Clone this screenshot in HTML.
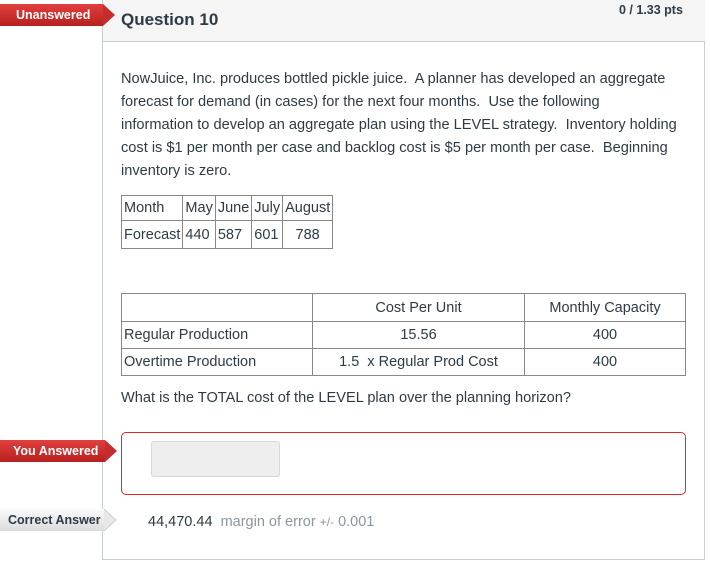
<!DOCTYPE html>
<html><head><style>
body{margin:0;width:711px;height:563px;background:#fff;font-family:"Liberation Sans",sans-serif;color:#2d3b45;position:relative;overflow:hidden}
.abs{position:absolute}
.box{left:102px;top:-1px;width:603px;height:561px;border:1px solid #c7cdd1;box-sizing:border-box}
.hdr{left:103px;top:0;width:602px;height:41px;background:#f5f5f5;border-bottom:1px solid #c7cdd1}
.tag{height:22px;line-height:22px;font-size:12.5px;font-weight:bold;color:#fff;background:linear-gradient(#e0403e,#b8201f);}
.tag:after{content:"";position:absolute;right:-12px;top:0;border-left:12px solid #c52c2b;border-top:11px solid transparent;border-bottom:11px solid transparent}
p{margin:0;font-size:14.6px;line-height:23px;color:#2d3b45;white-space:nowrap}
table{border-collapse:collapse;font-size:14.5px;position:absolute}
td{border:1px solid #888;padding:0 2px;color:#2d3b45;white-space:nowrap}
</style></head><body>
<div class="abs box"></div>
<div class="abs hdr"></div>
<div class="abs tag" style="left:0;top:4px;width:103px;text-align:left;padding-left:16px;box-sizing:border-box">Unanswered</div>
<div class="abs" style="left:121px;top:10px;font-size:17px;font-weight:bold;color:#2d3b45">Question 10</div>
<div class="abs" style="left:619px;top:3px;font-size:12.5px;font-weight:bold;color:#2d3b45">0 / 1.33 pts</div>
<div class="abs" style="left:121px;top:68px;width:575px">
<p>NowJuice, Inc. produces bottled pickle juice.&nbsp; A planner has developed an aggregate<br>forecast for demand (in cases) for the next four months.&nbsp; Use the following<br>information to develop an aggregate plan using the LEVEL strategy.&nbsp; Inventory holding<br>cost is $1 per month per case and backlog cost is $5 per month per case.&nbsp; Beginning<br>inventory is zero.</p></div>
<table style="left:121px;top:195px;width:211px">
<tr style="height:25px"><td style="width:57px">Month</td><td>May</td><td>June</td><td>July</td><td>August</td></tr>
<tr style="height:28px"><td>Forecast</td><td>440</td><td>587</td><td>601</td><td style="text-align:center">788</td></tr>
</table>
<table style="left:121px;top:293px;width:565px">
<tr style="height:28px"><td style="width:186px"></td><td style="width:207px;text-align:center">Cost Per Unit</td><td style="text-align:center">Monthly Capacity</td></tr>
<tr style="height:27px"><td>Regular Production</td><td style="text-align:center">15.56</td><td style="text-align:center">400</td></tr>
<tr style="height:27px"><td>Overtime Production</td><td style="text-align:center">1.5&nbsp; x Regular Prod Cost</td><td style="text-align:center">400</td></tr>
</table>
<div class="abs" style="left:121px;top:387px"><p>What is the TOTAL cost of the LEVEL plan over the planning horizon?</p></div>
<div class="abs" style="left:121px;top:432px;width:565px;height:63px;border:1.5px solid #e0262a;border-radius:5px;box-sizing:border-box"></div>
<div class="abs" style="left:151px;top:441px;width:129px;height:36px;background:#eee;border:1px solid #d8d8d8;border-radius:3px;box-sizing:border-box"></div>
<div class="abs tag" style="left:0;top:440px;width:105px;padding-left:13px;box-sizing:border-box">You Answered</div>
<div class="abs" style="left:0;top:509px;width:105px;height:22px;line-height:22px;font-size:12.5px;font-weight:bold;color:#2d3b45;background:linear-gradient(#fafafa,#dcdcdc);padding-left:8px;box-sizing:border-box">Correct Answer</div>
<svg class="abs" style="left:104px;top:509px" width="14" height="22"><path d="M0 0 L12 11 L0 22" fill="#e8e8e8" stroke="#ccc"/></svg>
<div class="abs" style="left:148px;top:514px;font-size:14.5px;color:#2d3b45">44,470.44 &nbsp;<span style="color:#8b969e">margin of error <span style="font-size:12px">+/-</span> 0.001</span></div>
</body></html>
